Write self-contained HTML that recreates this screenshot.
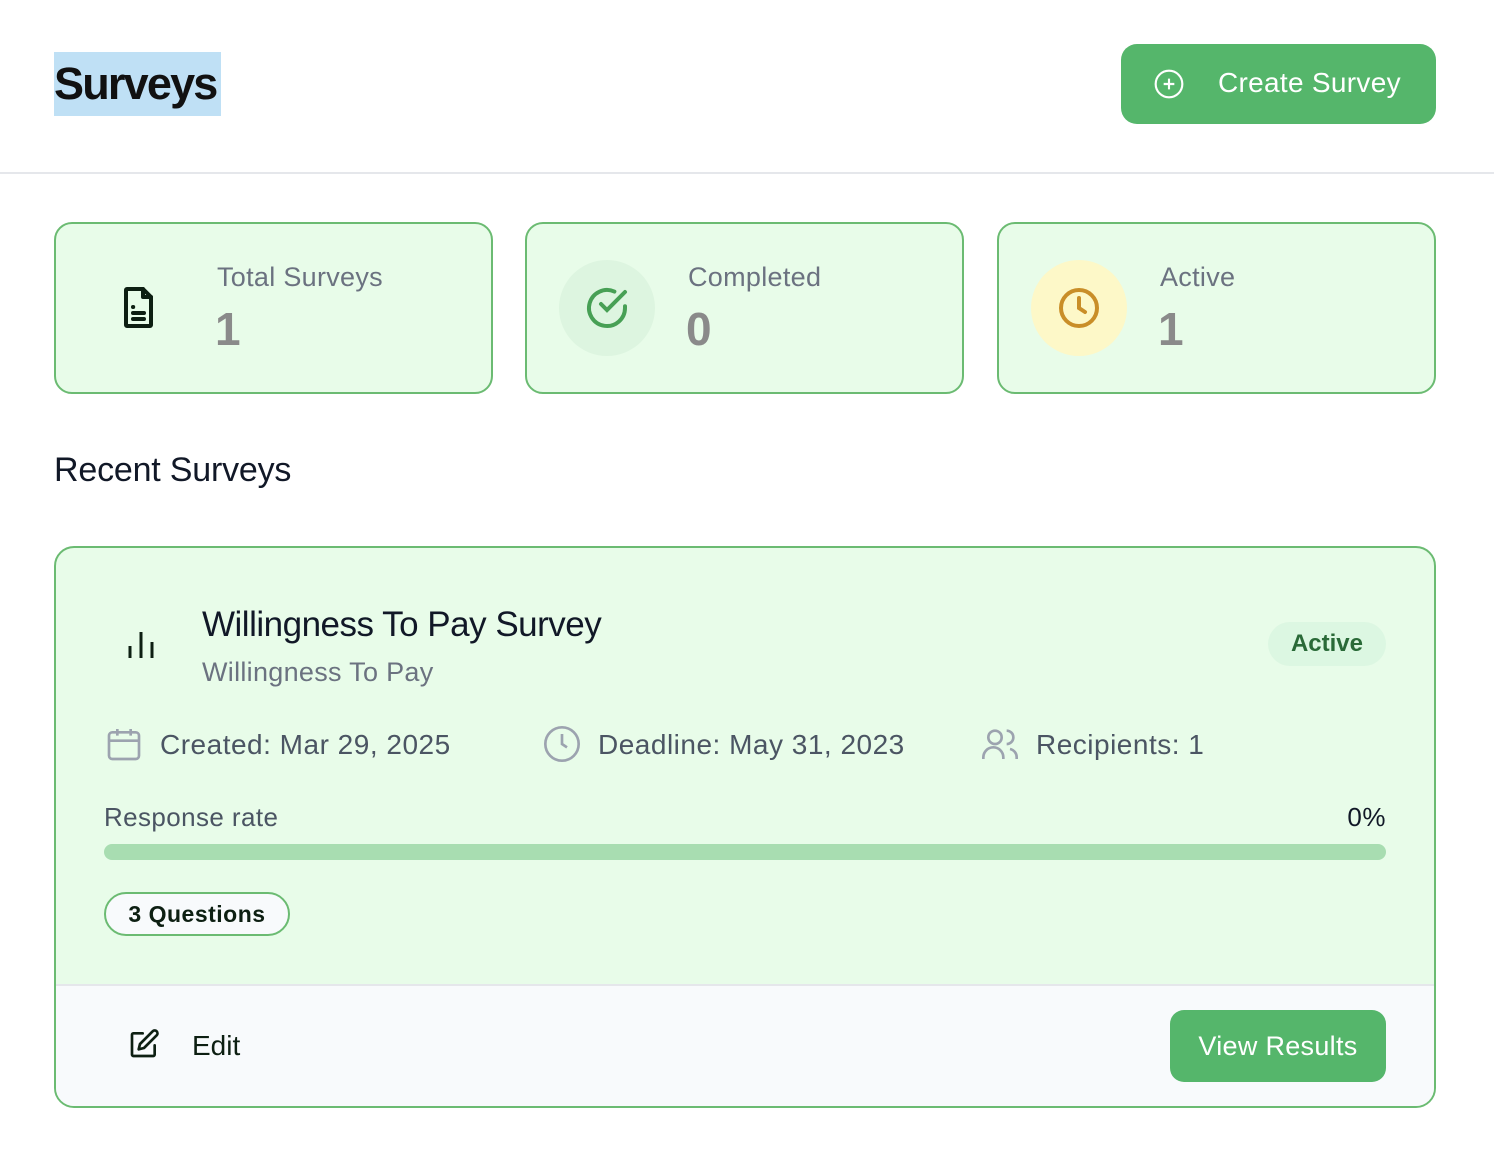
<!DOCTYPE html>
<html><head><meta charset="utf-8"><style>
*{box-sizing:border-box;margin:0;padding:0}
body{width:1494px;height:1150px;background:#fff;font-family:"Liberation Sans",sans-serif;position:relative;overflow:hidden}
.a{position:absolute}
.card{position:absolute;top:222px;width:439px;height:172px;background:#e8fce9;border:2px solid #6bbb72;border-radius:18px}
.lbl{position:absolute;left:161px;top:38px;font-size:27px;color:#6b7280;letter-spacing:0.3px}
.num{position:absolute;left:159px;top:78px;font-size:46px;color:#8a8a8a;font-weight:bold}
.ic{position:absolute;left:32px;top:36px;width:96px;height:96px;border-radius:50%}
.meta{font-size:28px;color:#4b5563;letter-spacing:0.5px}
</style></head><body>
<div class="a" style="left:54px;top:52px;width:167px;height:64px;background:#bfe0f5"></div>
<div class="a" style="left:54px;top:58px;font-size:45px;font-weight:bold;color:#111;letter-spacing:-1.8px">Surveys</div>
<div class="a" style="left:1121px;top:44px;width:315px;height:80px;background:#55b66b;border-radius:16px">
<svg class="a" style="left:32px;top:24px" width="32" height="32" viewBox="0 0 24 24" fill="none" stroke="#fff" stroke-width="1.6"><circle cx="12" cy="12" r="10"/><path d="M12 8v8M8 12h8"/></svg>
<div class="a" style="left:97px;top:23px;font-size:28px;color:#fff;letter-spacing:0.3px">Create Survey</div></div>
<div class="a" style="left:0;top:172px;width:1494px;height:2px;background:#e5e7eb"></div>

<div class="card" style="left:54px">
<svg class="a" style="left:58px;top:60px" width="48" height="48" viewBox="0 0 24 24" fill="none" stroke="#0d1f12" stroke-width="2" stroke-linejoin="round" stroke-linecap="round"><path d="M6.5 2.5h8l4 4v14a.5.5 0 0 1-.5.5H6.5a.5.5 0 0 1-.5-.5V3a.5.5 0 0 1 .5-.5z"/><path d="M14.5 2.5v4h4M9.5 11.5h.1M9.5 14.5h5.5M9.5 17.5h5.5"/></svg>
<div class="lbl">Total Surveys</div><div class="num">1</div></div>
<div class="card" style="left:525px">
<div class="ic" style="background:#ddf5e0"></div>
<svg class="a" style="left:56px;top:60px" width="48" height="48" viewBox="0 0 24 24" fill="none" stroke="#47a055" stroke-width="2" stroke-linecap="round"><path d="M21 11.1V12a9 9 0 1 1-5.3-8.2"/><path d="M21 4L12 13l-3-3"/></svg>
<div class="lbl">Completed</div><div class="num">0</div></div>
<div class="card" style="left:997px">
<div class="ic" style="background:#fdf8c8"></div>
<svg class="a" style="left:56px;top:60px" width="48" height="48" viewBox="0 0 24 24" fill="none" stroke="#c98e28" stroke-width="2" stroke-linecap="round"><circle cx="12" cy="12" r="9"/><path d="M12 7v5l3 2"/></svg>
<div class="lbl">Active</div><div class="num">1</div></div>

<div class="a" style="left:54px;top:451px;font-size:34px;color:#111827;letter-spacing:-0.2px">Recent Surveys</div>

<div class="a" style="left:54px;top:546px;width:1382px;height:562px;border:2px solid #6bbb72;border-radius:20px;background:#e8fce9;overflow:hidden">
<svg class="a" style="left:70px;top:80px" width="30" height="34" viewBox="0 0 30 34" fill="none" stroke="#0d1f12" stroke-width="3"><path d="M4 18v12M15 4v26M26 14v16"/></svg>
<div class="a" style="left:146px;top:57px;font-size:35px;color:#111827;letter-spacing:-0.5px">Willingness To Pay Survey</div>
<div class="a" style="left:146px;top:109px;font-size:27px;color:#6b7280;letter-spacing:0.3px">Willingness To Pay</div>
<div class="a" style="left:1212px;top:74px;width:118px;height:44px;border-radius:22px;background:#dcf7e2;font-size:24px;font-weight:bold;color:#2a6a38;text-align:center;line-height:44px">Active</div>
<svg class="a" style="left:48px;top:176px" width="40" height="40" viewBox="0 0 24 24" fill="none" stroke="#9ca3af" stroke-width="1.6"><rect x="3" y="5" width="18" height="16" rx="2"/><path d="M3 10h18M8 3v4M16 3v4"/></svg>
<div class="a meta" style="left:104px;top:181px">Created: Mar 29, 2025</div>
<svg class="a" style="left:486px;top:176px" width="40" height="40" viewBox="0 0 24 24" fill="none" stroke="#9ca3af" stroke-width="1.6"><circle cx="12" cy="12" r="10"/><path d="M12 6v6l3 2"/></svg>
<div class="a meta" style="left:542px;top:181px">Deadline: May 31, 2023</div>
<svg class="a" style="left:924px;top:176px" width="40" height="40" viewBox="0 0 24 24" fill="none" stroke="#9ca3af" stroke-width="1.6"><circle cx="9" cy="8" r="4"/><path d="M2 21v-1a6 6 0 0 1 12 0v1M16 4a4 4 0 0 1 0 8M18 15a5 5 0 0 1 4 5v1"/></svg>
<div class="a meta" style="left:980px;top:181px">Recipients: 1</div>
<div class="a" style="left:48px;top:254px;font-size:26px;color:#4b5563;letter-spacing:0.4px">Response rate</div>
<div class="a" style="right:48px;top:254px;font-size:26px;color:#111827;letter-spacing:0.5px">0%</div>
<div class="a" style="left:48px;top:296px;width:1282px;height:16px;border-radius:8px;background:#a8ddb1"></div>
<div class="a" style="left:48px;top:344px;width:186px;height:44px;border:2px solid #6bbb72;border-radius:22px;background:#f8fafc;font-size:23px;font-weight:bold;color:#0d1f12;text-align:center;line-height:40px;letter-spacing:0.5px">3 Questions</div>
<div class="a" style="left:0;top:436px;width:1382px;height:130px;background:#f8fafc;border-top:2px solid #e5e7eb">
<svg class="a" style="left:72px;top:42px" width="32" height="32" viewBox="0 0 24 24" fill="none" stroke="#0d1f12" stroke-width="2" stroke-linecap="round" stroke-linejoin="round"><path d="M11 4H4a1 1 0 0 0-1 1v15a1 1 0 0 0 1 1h15a1 1 0 0 0 1-1v-7"/><path d="M18.5 2.5a2.1 2.1 0 0 1 3 3L12 15l-4 1 1-4z"/></svg>
<div class="a" style="left:136px;top:44px;font-size:28px;color:#0d1f12">Edit</div>
<div class="a" style="left:1114px;top:24px;width:216px;height:72px;border-radius:14px;background:#55b66b;color:#fff;font-size:27px;text-align:center;line-height:72px;letter-spacing:0.3px">View Results</div>
</div></div>
</body></html>
